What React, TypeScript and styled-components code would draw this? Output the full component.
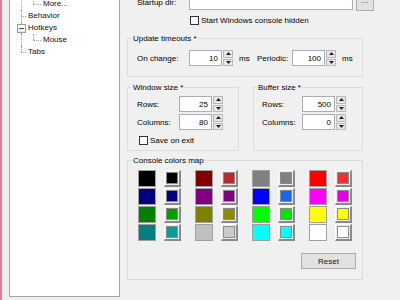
import React from 'react';
import styled, { createGlobalStyle } from 'styled-components';

const GlobalStyle = createGlobalStyle`
  html, body {
    margin: 0;
    padding: 0;
    background: #f0f0f0;
  }
  body {
    font-family: 'Liberation Sans', Arial, sans-serif;
    font-size: 8px;
    color: #000;
  }
`;

const Window = styled.div`
  display: flex;
  align-items: flex-start;
  width: 400px;
  height: 300px;
  overflow: hidden;
  box-sizing: border-box;
  border-left: 2px solid #e47a9c;
  background: #f0f0f0;
`;

/* ---------- tree ---------- */

const TreePanel = styled.div`
  flex: none;
  width: 111px;
  height: 317px;
  margin: -20px 0 0 7px;
  padding-top: 17px;
  box-sizing: border-box;
  border: 1px solid #a6a6a6;
  background: #fff;
`;

const TreeRow = styled.div`
  display: flex;
  height: 12px;
`;

type GuideKind = 'pipe' | 'tee' | 'elbow' | 'toggle';

const Guide = styled.span<{ $kind: GuideKind; $first?: boolean }>`
  position: relative;
  flex: none;
  width: ${(p) => (p.$first ? 17 : 15)}px;

  &::before {
    content: '';
    position: absolute;
    left: ${(p) => (p.$first ? 11 : 6)}px;
    top: 0;
    height: ${(p) => (p.$kind === 'elbow' ? '6px' : '100%')};
    border-left: 1px dotted #a0a0a0;
  }

  &::after {
    content: '';
    display: ${(p) => (p.$kind === 'pipe' ? 'none' : 'block')};
    position: absolute;
    left: ${(p) => (p.$first ? 11 : 6)}px;
    right: 1px;
    top: 6px;
    border-top: 1px dotted #a0a0a0;
  }
`;

const ToggleBox = styled.span`
  position: absolute;
  z-index: 1;
  left: 7px;
  top: 2px;
  width: 9px;
  height: 9px;
  box-sizing: border-box;
  border: 1px solid #9a9a9a;
  background: linear-gradient(#ffffff, #e8e8e8);
  display: flex;
  align-items: center;
  justify-content: center;

  &::after {
    content: '';
    width: 5px;
    height: 1px;
    background: #555;
  }
`;

const TreeLabel = styled.span`
  padding-left: 1px;
  line-height: 12px;
  white-space: nowrap;
  color: #111;
`;

type TreeItem = { label: string; guides: GuideKind[] };

const treeItems: TreeItem[] = [
  { label: 'More...', guides: ['pipe', 'elbow'] },
  { label: 'Behavior', guides: ['tee'] },
  { label: 'Hotkeys', guides: ['toggle'] },
  { label: 'Mouse', guides: ['pipe', 'elbow'] },
  { label: 'Tabs', guides: ['elbow'] },
];

/* ---------- right side ---------- */

const Side = styled.div`
  flex: none;
  width: 247px;
  margin: -7px 0 0 7px;
  display: flex;
  flex-direction: column;
`;

const StartupRow = styled.div`
  display: flex;
  align-items: center;
  height: 18px;
  padding-left: 10px;
`;

const Label = styled.span<{ $w: number }>`
  flex: none;
  width: ${(p) => p.$w}px;
  white-space: nowrap;
`;

const TextField = styled.div`
  width: 164px;
  height: 17px;
  align-self: flex-start;
  box-sizing: border-box;
  border: 1px solid #abadb3;
  background: #fff;
`;

const BrowseButton = styled.button`
  width: 18px;
  height: 18px;
  margin-left: 3px;
  padding: 0 0 3px;
  box-sizing: border-box;
  border: 1px solid #adadad;
  background: #e1e1e1;
  font: inherit;
  font-size: 8px;
  color: #333;
  letter-spacing: 0.5px;
`;

const CheckRow = styled.label<{ $indent: number; $top: number }>`
  display: flex;
  align-items: center;
  height: 9px;
  margin-top: ${(p) => p.$top}px;
  padding-left: ${(p) => p.$indent}px;
  white-space: nowrap;
`;

const CheckBox = styled.span`
  flex: none;
  width: 9px;
  height: 9px;
  margin-right: 2px;
  box-sizing: border-box;
  border: 1px solid #333;
  background: #fff;
`;

const Group = styled.div<{ $w: number; $pl?: number; $pb: number; $top: number }>`
  width: ${(p) => p.$w}px;
  margin-top: ${(p) => p.$top}px;
  padding: 0 9px ${(p) => p.$pb}px ${(p) => p.$pl ?? 9}px;
  box-sizing: border-box;
  border: 1px solid #dcdcdc;
  display: flex;
  flex-direction: column;
`;

const Legend = styled.span`
  align-self: flex-start;
  margin: -6px 0 0 -5px;
  padding: 0 1px;
  line-height: 11px;
  background: #f0f0f0;
  white-space: nowrap;
`;

const FieldRow = styled.div<{ $top: number }>`
  display: flex;
  align-items: center;
  height: 16px;
  margin-top: ${(p) => p.$top}px;
`;

const Unit = styled.span<{ $w?: number }>`
  flex: none;
  width: ${(p) => p.$w ?? 14}px;
  margin-left: 6px;
`;

const SpinBox = styled.div`
  flex: none;
  display: flex;
  width: 44px;
  height: 16px;
`;

const SpinInput = styled.div`
  flex: 1;
  display: flex;
  align-items: center;
  justify-content: flex-end;
  padding-right: 3px;
  box-sizing: border-box;
  border: 1px solid #abadb3;
  background: #fff;
`;

const SpinButtons = styled.div`
  flex: none;
  width: 10px;
  margin-left: 1px;
  display: flex;
  flex-direction: column;
  gap: 1px;
`;

const SpinArrow = styled.span`
  flex: 1;
  display: flex;
  align-items: center;
  justify-content: center;
  box-sizing: border-box;
  border: 1px solid #b9b9b9;
  background: #e6e6e6;
`;

const PairRow = styled.div`
  display: flex;
  gap: 14px;
  margin-top: 10px;
`;

const Palette = styled.div`
  display: flex;
  gap: 14px;
  margin: 4px 0 0 1px;
`;

const PaletteColumn = styled.div`
  display: grid;
  grid-template-columns: 18px 17px;
  grid-auto-rows: 17px;
  column-gap: 8px;
  row-gap: 1px;
`;

const Swatch = styled.span<{ $c: string }>`
  box-sizing: border-box;
  border: 1px solid #a0a0a0;
  background: ${(p) => p.$c};
`;

const SwatchButton = styled.span`
  display: flex;
  align-items: center;
  justify-content: center;
  box-sizing: border-box;
  border-style: solid;
  border-width: 1px 2px 2px 1px;
  border-color: #ffffff #8a8a8a #8a8a8a #ffffff;
  background: #ececec;
`;

const SwatchChip = styled.span<{ $c: string }>`
  width: 12px;
  height: 12px;
  box-sizing: border-box;
  border: 1px solid #8c8c8c;
  background: ${(p) => p.$c};
`;

const ResetRow = styled.div`
  display: flex;
  justify-content: flex-end;
  margin: 12px -3px 0 0;
`;

const ResetButton = styled.button`
  width: 55px;
  height: 16px;
  padding: 0;
  box-sizing: border-box;
  border: 1px solid #adadad;
  background: #e1e1e1;
  font: inherit;
  font-size: 8px;
  color: #111;
`;

const palette: [string, string][][] = [
  [
    ['#000000', '#000000'],
    ['#000080', '#000080'],
    ['#008000', '#00a000'],
    ['#008080', '#00a0a0'],
  ],
  [
    ['#800000', '#bf2828'],
    ['#800080', '#800080'],
    ['#808000', '#8c8c00'],
    ['#c0c0c0', '#cbcbcb'],
  ],
  [
    ['#808080', '#808080'],
    ['#0000ff', '#1565f0'],
    ['#00ff00', '#00e600'],
    ['#00ffff', '#00ffff'],
  ],
  [
    ['#ff0000', '#ee3232'],
    ['#ff00ff', '#e600e6'],
    ['#ffff00', '#ffff00'],
    ['#ffffff', '#ffffff'],
  ],
];

function Spinner({ value }: { value: string }) {
  return (
    <SpinBox>
      <SpinInput>{value}</SpinInput>
      <SpinButtons>
        <SpinArrow>
          <svg width="5" height="3" viewBox="0 0 5 3">
            <polygon points="2.5,0 5,3 0,3" fill="#222" />
          </svg>
        </SpinArrow>
        <SpinArrow>
          <svg width="5" height="3" viewBox="0 0 5 3">
            <polygon points="0,0 5,0 2.5,3" fill="#222" />
          </svg>
        </SpinArrow>
      </SpinButtons>
    </SpinBox>
  );
}

export default function App() {
  return (
    <>
      <GlobalStyle />
      <Window>
        <TreePanel>
          {treeItems.map((item) => (
            <TreeRow key={item.label}>
              {item.guides.map((g, i) => (
                <Guide key={i} $kind={g === 'toggle' ? 'tee' : g} $first={i === 0}>
                  {g === 'toggle' && <ToggleBox />}
                </Guide>
              ))}
              <TreeLabel>{item.label}</TreeLabel>
            </TreeRow>
          ))}
        </TreePanel>

        <Side>
          <StartupRow>
            <Label $w={52}>Startup dir:</Label>
            <TextField />
            <BrowseButton>...</BrowseButton>
          </StartupRow>
          <CheckRow $indent={63} $top={5}>
            <CheckBox />
            Start Windows console hidden
          </CheckRow>

          <Group $w={236} $pb={10} $top={13}>
            <Legend>Update timeouts *</Legend>
            <FieldRow $top={6}>
              <Label $w={52}>On change:</Label>
              <Spinner value="10" />
              <Unit $w={18}>ms</Unit>
              <Label $w={35}>Periodic:</Label>
              <Spinner value="100" />
              <Unit>ms</Unit>
            </FieldRow>
          </Group>

          <PairRow>
            <Group $w={112} $pb={5} $top={0}>
              <Legend>Window size *</Legend>
              <FieldRow $top={3}>
                <Label $w={42}>Rows:</Label>
                <Spinner value="25" />
              </FieldRow>
              <FieldRow $top={2}>
                <Label $w={42}>Columns:</Label>
                <Spinner value="80" />
              </FieldRow>
              <CheckRow $indent={2} $top={6}>
                <CheckBox />
                Save on exit
              </CheckRow>
            </Group>
            <Group $w={110} $pl={8} $pb={5} $top={0}>
              <Legend>Buffer size *</Legend>
              <FieldRow $top={3}>
                <Label $w={40}>Rows:</Label>
                <Spinner value="500" />
              </FieldRow>
              <FieldRow $top={2}>
                <Label $w={40}>Columns:</Label>
                <Spinner value="0" />
              </FieldRow>
            </Group>
          </PairRow>

          <Group $w={236} $pb={10} $top={9}>
            <Legend>Console colors map</Legend>
            <Palette>
              {palette.map((column, ci) => (
                <PaletteColumn key={ci}>
                  {column.map(([big, small], ri) => (
                    <React.Fragment key={ri}>
                      <Swatch $c={big} />
                      <SwatchButton>
                        <SwatchChip $c={small} />
                      </SwatchButton>
                    </React.Fragment>
                  ))}
                </PaletteColumn>
              ))}
            </Palette>
            <ResetRow>
              <ResetButton>Reset</ResetButton>
            </ResetRow>
          </Group>
        </Side>
      </Window>
    </>
  );
}
